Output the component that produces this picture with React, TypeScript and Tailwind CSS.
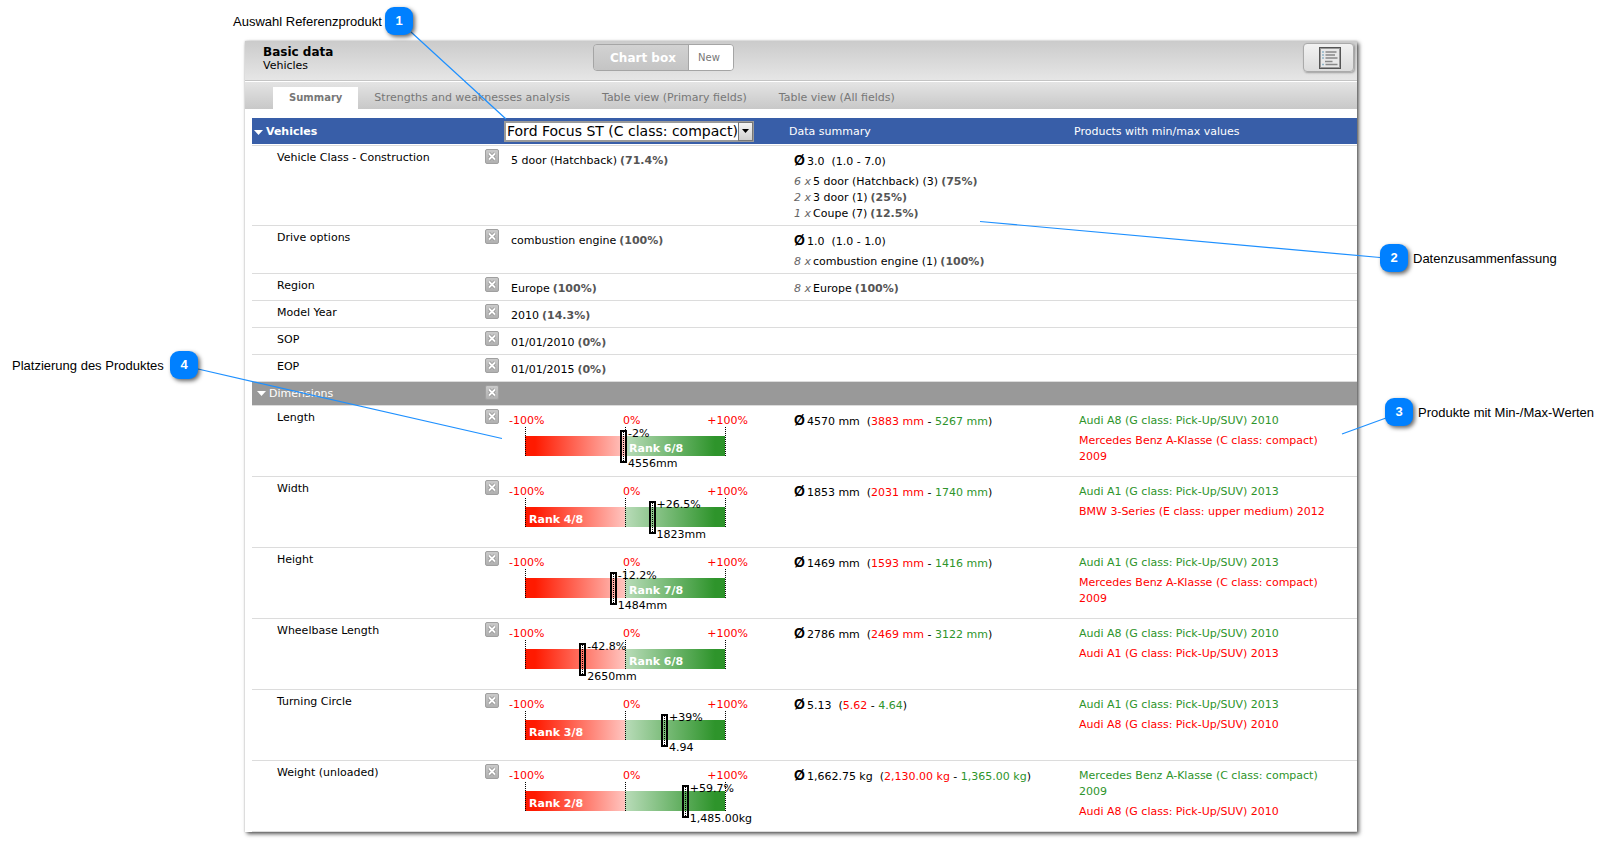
import { useState } from 'react';

type Tone = 'good' | 'bad';

interface Share {
  count?: string;
  label: string;
  percent: string;
}

interface FieldRow {
  name: string;
  value: Share;
  average?: string;
  shares?: Share[];
}

interface MeasureRow {
  name: string;
  position: number;
  delta: string;
  value: string;
  rank: string;
  average: string;
  low: string;
  high: string;
  products: { label: string; tone: Tone }[];
}

const TABS = [
  'Summary',
  'Strengths and weaknesses analysis',
  'Table view (Primary fields)',
  'Table view (All fields)',
];

const FIELDS: FieldRow[] = [
  {
    name: 'Vehicle Class - Construction',
    value: { label: '5 door (Hatchback)', percent: '71.4%' },
    average: '3.0  (1.0 - 7.0)',
    shares: [
      { count: '6 x', label: '5 door (Hatchback) (3)', percent: '75%' },
      { count: '2 x', label: '3 door (1)', percent: '25%' },
      { count: '1 x', label: 'Coupe (7)', percent: '12.5%' },
    ],
  },
  {
    name: 'Drive options',
    value: { label: 'combustion engine', percent: '100%' },
    average: '1.0  (1.0 - 1.0)',
    shares: [{ count: '8 x', label: 'combustion engine (1)', percent: '100%' }],
  },
  {
    name: 'Region',
    value: { label: 'Europe', percent: '100%' },
    shares: [{ count: '8 x', label: 'Europe', percent: '100%' }],
  },
  { name: 'Model Year', value: { label: '2010', percent: '14.3%' } },
  { name: 'SOP', value: { label: '01/01/2010', percent: '0%' } },
  { name: 'EOP', value: { label: '01/01/2015', percent: '0%' } },
];

const MEASURES: MeasureRow[] = [
  {
    name: 'Length',
    position: -2,
    delta: '-2%',
    value: '4556mm',
    rank: 'Rank 6/8',
    average: '4570 mm',
    low: '3883 mm',
    high: '5267 mm',
    products: [
      { label: 'Audi A8 (G class: Pick-Up/SUV) 2010', tone: 'good' },
      { label: 'Mercedes Benz A-Klasse (C class: compact) 2009', tone: 'bad' },
    ],
  },
  {
    name: 'Width',
    position: 26.5,
    delta: '+26.5%',
    value: '1823mm',
    rank: 'Rank 4/8',
    average: '1853 mm',
    low: '2031 mm',
    high: '1740 mm',
    products: [
      { label: 'Audi A1 (G class: Pick-Up/SUV) 2013', tone: 'good' },
      { label: 'BMW 3-Series (E class: upper medium) 2012', tone: 'bad' },
    ],
  },
  {
    name: 'Height',
    position: -12.2,
    delta: '-12.2%',
    value: '1484mm',
    rank: 'Rank 7/8',
    average: '1469 mm',
    low: '1593 mm',
    high: '1416 mm',
    products: [
      { label: 'Audi A1 (G class: Pick-Up/SUV) 2013', tone: 'good' },
      { label: 'Mercedes Benz A-Klasse (C class: compact) 2009', tone: 'bad' },
    ],
  },
  {
    name: 'Wheelbase Length',
    position: -42.8,
    delta: '-42.8%',
    value: '2650mm',
    rank: 'Rank 6/8',
    average: '2786 mm',
    low: '2469 mm',
    high: '3122 mm',
    products: [
      { label: 'Audi A8 (G class: Pick-Up/SUV) 2010', tone: 'good' },
      { label: 'Audi A1 (G class: Pick-Up/SUV) 2013', tone: 'bad' },
    ],
  },
  {
    name: 'Turning Circle',
    position: 39,
    delta: '+39%',
    value: '4.94',
    rank: 'Rank 3/8',
    average: '5.13',
    low: '5.62',
    high: '4.64',
    products: [
      { label: 'Audi A1 (G class: Pick-Up/SUV) 2013', tone: 'good' },
      { label: 'Audi A8 (G class: Pick-Up/SUV) 2010', tone: 'bad' },
    ],
  },
  {
    name: 'Weight (unloaded)',
    position: 59.7,
    delta: '+59.7%',
    value: '1,485.00kg',
    rank: 'Rank 2/8',
    average: '1,662.75 kg',
    low: '2,130.00 kg',
    high: '1,365.00 kg',
    products: [
      { label: 'Mercedes Benz A-Klasse (C class: compact) 2009', tone: 'good' },
      { label: 'Audi A8 (G class: Pick-Up/SUV) 2010', tone: 'bad' },
    ],
  },
];

function RemoveButton({ name }: { name: string }) {
  return (
    <button
      type="button"
      aria-label={`Remove ${name}`}
      className="block h-[15px] w-[14px] rounded-[2px] border border-[#a0a0a0] bg-linear-to-b from-[#cacaca] to-[#b0b0b0]"
    >
      <svg viewBox="0 0 12 13" className="block h-[13px] w-[12px]" fill="none">
        <path d="M3 3.5 9 9.5M9 3.5 3 9.5" stroke="#909090" strokeWidth="3.4" />
        <path d="M3 3.5 9 9.5M9 3.5 3 9.5" stroke="#fff" strokeWidth="1.8" />
      </svg>
    </button>
  );
}

function Triangle() {
  return (
    <svg width="9" height="5" viewBox="0 0 9 5" className="shrink-0">
      <path d="M0 0h9L4.5 5z" fill="#fff" />
    </svg>
  );
}

function ShareText({ share }: { share: Share }) {
  return (
    <p>
      {share.count && <i className="mr-0.5 text-[#666]">{share.count}</i>}
      {share.label}
      <b className="ml-[3px] text-[#555]">({share.percent})</b>
    </p>
  );
}

function Average({ children }: { children: React.ReactNode }) {
  return (
    <p className="mb-[3px] h-[18px] leading-[18px] whitespace-pre">
      <b className="mr-0.5 font-['Liberation_Sans',Arial,sans-serif] text-[14px] leading-none">Ø</b>
      {children}
    </p>
  );
}

function Gauge({ row }: { row: MeasureRow }) {
  const markerLeft = `${50 + row.position / 2}%`;
  const tick = 'absolute -top-[9px] bottom-0 border-l border-dotted border-black';

  return (
    <div className="w-[244px]">
      <div className="grid grid-cols-[114px_1fr_auto] pl-[5px] text-[#f00]">
        <span>-100%</span>
        <span>0%</span>
        <span>+100%</span>
      </div>
      <div className="relative mt-[7px] ml-[21px] flex h-5 w-[200px]">
        <div className="w-1/2 bg-[linear-gradient(to_right,#ff1a00_10%,#ffc4bf)]" />
        <div className="w-1/2 bg-[linear-gradient(to_right,#b9dcb9,#2e942b_90%)]" />
        <span className={`${tick} left-0`} />
        <span className={`${tick} left-1/2`} />
        <span className={`${tick} left-full`} />
        <b className={`absolute top-[5px] text-white ${row.position < 0 ? 'left-[104px]' : 'left-1'}`}>
          {row.rank}
        </b>
        <div
          className="absolute -top-1.5 flex h-[33px] w-[7px] -translate-x-[3px] justify-center border-2 border-black"
          style={{ left: markerLeft }}
        >
          <span className="border-l border-dotted border-black" />
        </div>
        <div
          className="absolute -top-2.5 flex flex-col gap-3.5 pl-[5px] whitespace-nowrap"
          style={{ left: markerLeft }}
        >
          <span>{row.delta}</span>
          <span>{row.value}</span>
        </div>
      </div>
    </div>
  );
}

function Callout({ number, text, className, flip }: { number: number; text: string; className: string; flip?: boolean }) {
  return (
    <div className={`absolute flex items-center font-['Liberation_Sans',Arial,sans-serif] text-[13px] whitespace-nowrap ${flip ? 'flex-row-reverse justify-between' : 'gap-[5px]'} ${className}`}>
      <span className="flex size-7 items-center justify-center rounded-[9px] bg-[#0080ff] font-bold text-white shadow-[2px_2px_4px_rgba(0,0,0,0.6)]">
        {number}
      </span>
      <span className="pt-px">{text}</span>
    </div>
  );
}

export default function App() {
  const [tab, setTab] = useState(TABS[0]);
  const [product, setProduct] = useState('Ford Focus ST (C class: compact)');

  return (
    <div className="relative min-h-screen bg-white pt-[41px] pb-[9px] font-['Verdana','DejaVu_Sans',sans-serif] text-[11px] leading-4 text-black">
      <main className="mr-[255px] ml-[245px] bg-white shadow-[2px_2px_4px_rgba(0,0,0,0.65),0_0_2px_rgba(0,0,0,0.2)]">
        {/* Title bar */}
        <header className="flex h-10 items-start border-b border-[#c4c4c4] bg-linear-to-b from-[#cbcbcb] to-[#e6e6e6] pr-[3px] pl-[18px]">
          <div className="w-[330px] pt-1 leading-[14px]">
            <h1 className="text-[12px] font-bold">Basic data</h1>
            <p>Vehicles</p>
          </div>
          <div className="mt-[3px] flex h-[27px] overflow-hidden rounded-[4px] border border-[#a5a5a5]">
            <button type="button" className="w-[95px] border-r border-[#a5a5a5] bg-linear-to-b from-[#d2d2d2] to-[#c4c4c4] pl-1 text-[12px] font-bold text-white">
              Chart box
            </button>
            <button type="button" className="w-11 bg-white pt-px pr-1 text-[10px] text-[#777]">New</button>
          </div>
          <button
            type="button"
            aria-label="Report"
            className="mt-0.5 ml-auto flex h-[29px] w-[51px] items-center justify-center rounded-[4px] border border-[#aaa] bg-linear-to-b from-[#f2f2f2] to-[#dcdcdc] pl-0.5 shadow-[1px_1px_2px_rgba(0,0,0,0.3)]"
          >
            <svg width="22" height="22" viewBox="0 0 22 22">
              <rect x="0.5" y="0.5" width="21" height="21" fill="#e8e8e8" stroke="#555" />
              <rect x="1.5" y="1.5" width="19" height="19" fill="none" stroke="#999" />
              <path d="M6.500 5h11M6.500 8h9.500M6.500 11h12M6 14.500h7.500M6.500 17.500h12" stroke="#888" strokeWidth="1.600" />
              <path d="M3 5h2M3 8h2M3 11h2M3 17.500h2" stroke="#8fb4c8" strokeWidth="1.600" />
            </svg>
          </button>
        </header>

        {/* Tabs */}
        <nav className="flex h-7 items-end border-t border-white bg-linear-to-b from-[#e4e4e4] to-[#c8c8c8] pl-7 text-[#777]">
          {TABS.map((name) => (
            <button
              key={name}
              type="button"
              onClick={() => setTab(name)}
              className={`h-[22px] px-4 ${name === tab ? 'bg-white text-[10px] font-bold' : 'text-[11px]'}`}
            >
              {name}
            </button>
          ))}
        </nav>

        <div className="pt-[9px] pl-[7px]">
          <table className="w-full table-fixed border-collapse text-left">
            <colgroup>
              <col className="w-[233px]" />
              <col className="w-[19px]" />
              <col className="w-[285px]" />
              <col className="w-[285px]" />
              <col />
            </colgroup>
            <thead>
              <tr className="h-[26px] bg-[#385ea8] text-white">
                <th colSpan={2} className="p-0 pt-0.5">
                  <span className="flex items-center gap-[3px] pl-0.5">
                    <Triangle />
                    Vehicles
                  </span>
                </th>
                <th className="p-0 font-normal">
                  <div className="relative h-[21px] w-[250px]">
                    <select
                      aria-label="Reference product"
                      value={product}
                      onChange={(e) => setProduct(e.target.value)}
                      className="block h-[21px] w-full appearance-none border-2 border-[#9a9a9a] bg-white pl-px text-[14px] leading-[17px] text-black"
                    >
                      <option>Ford Focus ST (C class: compact)</option>
                    </select>
                    <span className="pointer-events-none absolute top-px right-px flex h-[19px] w-[15px] items-center justify-center border border-[#777] bg-linear-to-b from-[#f4f4f4] to-[#d0d0d0]">
                      <svg width="7" height="4" viewBox="0 0 7 4">
                        <path d="M0 0h7L3.5 4z" fill="#000" />
                      </svg>
                    </span>
                  </div>
                </th>
                <th className="p-0 pt-0.5 font-normal">Data summary</th>
                <th className="p-0 pt-0.5 font-normal">Products with min/max values</th>
              </tr>
              <tr className="h-px border-b border-[#dcdcdc]">
                <td colSpan={5} className="p-0" />
              </tr>
            </thead>
            <tbody>
              {FIELDS.map((row) => (
                <tr key={row.name} className="border-b border-[#dcdcdc] align-top">
                  <td className="pt-1 pl-[25px]">{row.name}</td>
                  <td className="pt-[3px]"><RemoveButton name={row.name} /></td>
                  <td className="pt-[7px] pb-[3px] pl-[7px]"><ShareText share={row.value} /></td>
                  <td className="pt-[7px] pb-[3px] pl-[5px]">
                    {row.average && <Average>{row.average}</Average>}
                    {row.shares?.map((share) => <ShareText key={share.label} share={share} />)}
                  </td>
                  <td />
                </tr>
              ))}
              <tr className="h-6 border-b border-[#dcdcdc] bg-[#999] align-top text-white">
                <td className="pt-1 pl-[5px]">
                  <span className="flex items-center gap-[3px]">
                    <Triangle />
                    Dimensions
                  </span>
                </td>
                <td className="pt-[3px]"><RemoveButton name="Dimensions" /></td>
                <td colSpan={3} />
              </tr>
              {MEASURES.map((row) => (
                <tr key={row.name} className="h-[71px] border-b border-[#dcdcdc] align-top">
                  <td className="pt-1 pl-[25px]">{row.name}</td>
                  <td className="pt-[3px]"><RemoveButton name={row.name} /></td>
                  <td className="pt-[7px]"><Gauge row={row} /></td>
                  <td className="pt-[7px] pl-[5px]">
                    <Average>
                      {row.average}{'  ('}
                      <span className="text-[#f00]">{row.low}</span>
                      {' - '}
                      <span className="text-[#2e942b]">{row.high}</span>)
                    </Average>
                  </td>
                  <td className="space-y-1 pt-[7px] pr-5 pl-[5px]">
                    {row.products.map((p) => (
                      <p key={p.label} className={p.tone === 'good' ? 'text-[#2e942b]' : 'text-[#f00]'}>
                        {p.label}
                      </p>
                    ))}
                  </td>
                </tr>
              ))}
            </tbody>
          </table>
        </div>
      </main>

      {/* Annotation lines and callouts over the panel */}
      <svg className="pointer-events-none absolute top-0 left-0" width="1612" height="841" stroke="#1e90ff" strokeWidth="1.2">
        <path d="M411 32 506 119M980 221.500 1380 257.500M1342 434 1386 418M198 369 502 438.500" />
      </svg>
      <Callout number={1} text="Auswahl Referenzprodukt" flip className="top-[7px] left-[233px] w-[180px]" />
      <Callout number={2} text="Datenzusammenfassung" className="top-[244px] left-[1380px]" />
      <Callout number={3} text="Produkte mit Min-/Max-Werten" className="top-[398px] left-[1385px]" />
      <Callout number={4} text="Platzierung des Produktes" flip className="top-[351px] left-3 w-[186px]" />
    </div>
  );
}
